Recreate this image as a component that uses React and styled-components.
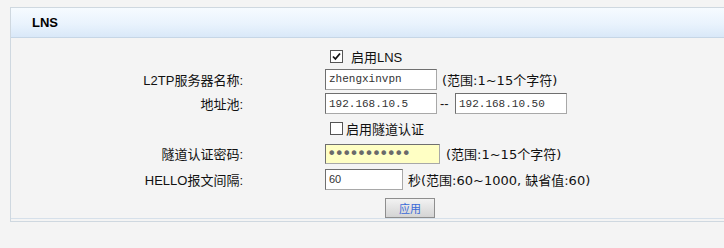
import React from "react";
import styled, { createGlobalStyle } from "styled-components";

const GlobalStyle = createGlobalStyle`
  html, body {
    margin: 0;
    padding: 0;
    background: #f4f4f4;
    overflow: hidden;
  }
  body {
    padding: 7px 0 0 10px;
    font-family: "Liberation Sans", Arial, "Noto Sans CJK SC", sans-serif;
    font-size: 13px;
    color: #111;
  }
`;

const Panel = styled.div`
  width: 740px;
  border: 1px solid #cfd8e0;
  border-right: none;
  background: #f4f4f4;
  padding-bottom: 2px;
`;

const Header = styled.div`
  height: 29px;
  display: flex;
  align-items: center;
  padding-left: 21px;
  background: linear-gradient(to bottom, #f6fbff 0%, #e9f3fd 55%, #d9e8f8 100%);
  border-bottom: 1px solid #c6d6e6;
  font-weight: bold;
  font-size: 13px;
  color: #000;
`;

const Body = styled.div`
  padding-top: 7px;
  border-bottom: 1px solid #d6e0ea;
`;

const Row = styled.div`
  display: grid;
  grid-template-columns: 232px 1fr;
  column-gap: 82px;
  align-items: center;
  height: ${(p) => p.h}px;
`;

const Label = styled.div`
  text-align: right;
  white-space: nowrap;
`;

const Field = styled.div`
  display: flex;
  align-items: center;
  white-space: nowrap;
`;

const Input = styled.input`
  box-sizing: border-box;
  width: ${(p) => p.w}px;
  height: ${(p) => p.ht || 21}px;
  margin: 0;
  padding: 0 3px;
  border: 1px solid #a8a8a8;
  border-top-color: #6f6f6f;
  border-left-color: #6f6f6f;
  background: #fff;
  font-family: "Liberation Mono", "Courier New", monospace;
  font-size: 11px;
  color: #333;
  outline: none;
`;

const PlainInput = styled(Input)`
  font-family: "Liberation Sans", Arial, sans-serif;
  font-size: 11px;
`;

const SecretInput = styled(Input)`
  background: #ffffc4;
  font-family: "DejaVu Sans", sans-serif;
  font-size: 16px;
  letter-spacing: -2px;
  color: #6a6a6a;
  padding-left: 1px;
`;

const Hint = styled.span`
  margin-left: ${(p) => p.ml || 0}px;
  font-family: "DejaVu Sans", "Noto Sans CJK SC", sans-serif;
  font-size: 13px;
  color: #111;
`;

const Dash = styled.span`
  width: 18px;
  padding-left: 3px;
  box-sizing: border-box;
`;

const Check = styled.label`
  display: flex;
  align-items: center;
  margin-left: 5px;
  gap: ${(p) => p.gap}px;
`;

const Box = styled.span`
  width: 11px;
  height: 11px;
  border: 1px solid #555;
  background: #fff;
  display: flex;
  align-items: center;
  justify-content: center;
`;

const ButtonRow = styled.div`
  display: flex;
  justify-content: center;
  padding-left: 58px;
  margin-top: 6px;
`;

const Button = styled.button`
  width: 50px;
  height: 20px;
  padding: 0;
  border: 1px solid #8e8e8e;
  background: linear-gradient(to bottom, #f2f2f2 0%, #e0e0e0 60%, #d4d4d4 100%);
  color: #3a6ad8;
  font-family: "Noto Sans CJK SC", sans-serif;
  font-size: 11px;
  cursor: pointer;
`;

const Tick = () => (
  <svg width="11" height="11" viewBox="0 0 11 11">
    <path d="M2 5.5 L4.4 8 L9 2.5" fill="none" stroke="#111" strokeWidth="1.8" />
  </svg>
);

export default function App() {
  return (
    <>
      <GlobalStyle />
      <Panel>
        <Header>LNS</Header>
        <Body>
          <Row h={22}>
            <Label />
            <Field>
              <Check gap={8}>
                <Box>
                  <Tick />
                </Box>
                启用LNS
              </Check>
            </Field>
          </Row>
          <Row h={24}>
            <Label>L2TP服务器名称:</Label>
            <Field>
              <Input w={112} defaultValue="zhengxinvpn" readOnly />
              <Hint ml={5}>(范围:1~15个字符)</Hint>
            </Field>
          </Row>
          <Row h={25}>
            <Label>地址池:</Label>
            <Field>
              <Input w={112} defaultValue="192.168.10.5" readOnly />
              <Dash>--</Dash>
              <Input w={112} defaultValue="192.168.10.50" readOnly />
            </Field>
          </Row>
          <Row h={25}>
            <Label />
            <Field>
              <Check gap={3}>
                <Box />
                启用隧道认证
              </Check>
            </Field>
          </Row>
          <Row h={25}>
            <Label>隧道认证密码:</Label>
            <Field>
              <SecretInput w={115} ht={20} type="password" defaultValue="12345678901" readOnly />
              <Hint ml={6}>(范围:1~15个字符)</Hint>
            </Field>
          </Row>
          <Row h={26}>
            <Label>HELLO报文间隔:</Label>
            <Field>
              <PlainInput w={78} defaultValue="60" readOnly />
              <Hint ml={5}>秒(范围:60~1000, 缺省值:60)</Hint>
            </Field>
          </Row>
          <ButtonRow>
            <Button>应用</Button>
          </ButtonRow>
        </Body>
      </Panel>
    </>
  );
}
